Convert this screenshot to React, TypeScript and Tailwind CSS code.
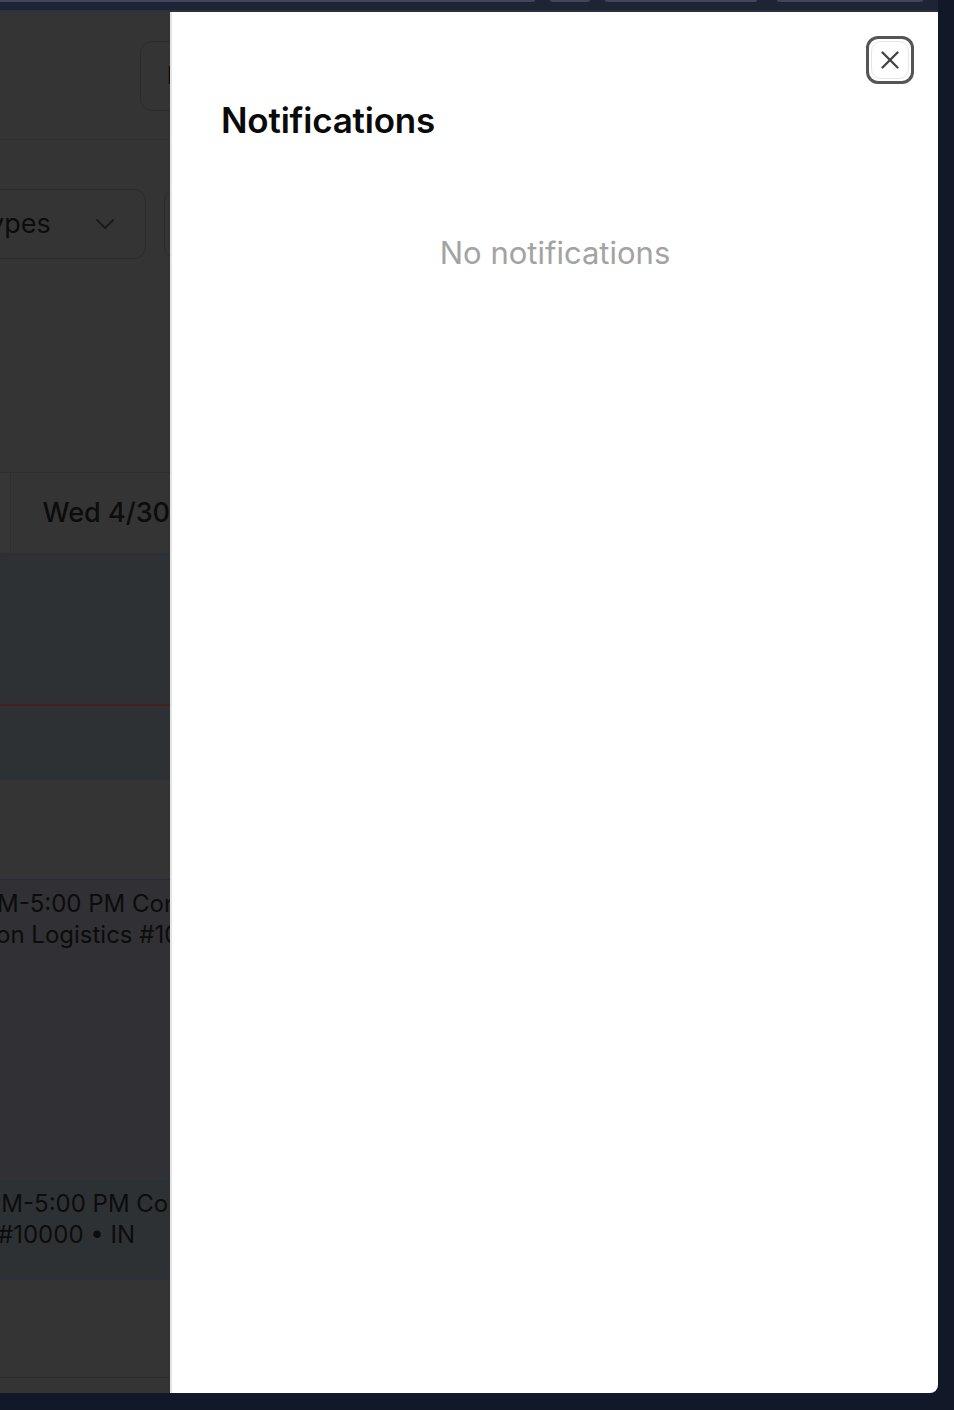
import React from "react";

const font = { fontFamily: "Inter, 'Noto Sans', sans-serif" };

function CloseIcon() {
  return (
    <svg width="30" height="30" viewBox="0 0 24 24" fill="none" stroke="#444444" strokeWidth="1.9" strokeLinecap="round" strokeLinejoin="round">
      <path d="M18 6 6 18" />
      <path d="m6 6 12 12" />
    </svg>
  );
}

function Chevron() {
  return (
    <svg width="20" height="12" viewBox="0 0 20 12" fill="none" stroke="#1a1a1a" strokeWidth="2" strokeLinecap="round" strokeLinejoin="round">
      <path d="M2 2 10 10 18 2" />
    </svg>
  );
}

function Backdrop() {
  return (
    <div className="w-[170px] h-full overflow-hidden flex flex-col bg-[#343434] text-[#0c0c0c]" style={font}>
      {/* header */}
      <div className="h-[128px] shrink-0 border-b border-[#303030] pt-[29px] pl-[140px]">
        <div className="h-[70px] w-[120px] rounded-[12px] border border-[#2c2c2c] flex items-center pl-[26px] text-[24px] font-semibold">
          M
        </div>
      </div>
      {/* filters */}
      <div className="h-[332px] shrink-0 pt-[49px] flex">
        <div className="h-[70px] w-[160px] ml-[-14px] shrink-0 rounded-[12px] border border-[#2c2c2c] flex items-center justify-between pl-[4px] pr-[30px]">
          <span className="text-[27px] whitespace-nowrap ml-[-2px]">ypes</span>
          <Chevron />
        </div>
        <div className="h-[70px] w-[60px] ml-[18px] shrink-0 rounded-[12px] border border-[#2c2c2c]" />
      </div>
      {/* day header */}
      <div className="h-[81px] shrink-0 border-t border-[#2e2e2e] flex">
        <div className="w-[12px] border-r border-[#2e2e2e] bg-[#363636]" />
        <div className="flex-1 flex items-center pl-[31px] text-[27px] font-medium whitespace-nowrap">Wed 4/30</div>
      </div>
      {/* bluish block */}
      <div className="h-[227px] shrink-0 bg-[#2e3134] flex flex-col">
        <div className="h-[151px]" />
        <div className="h-[2px] bg-[#4a1c1c]" />
        <div className="flex-1 border-b border-[#283044]" />
      </div>
      <div className="h-[100px] shrink-0 bg-[#343434] border-b border-[#2c2a38]" />
      {/* event 1 */}
      <div className="h-[300px] shrink-0 bg-[#313034] pt-[8px] text-[24px] leading-[31px] whitespace-nowrap">
        <div className="-ml-[3px]">M-5:00 PM Contractor</div>
        <div className="-ml-[4px]">on Logistics #10000 • IN</div>
      </div>
      {/* event 2 */}
      <div className="h-[100px] shrink-0 bg-[#2e3134] border-y border-[#263044] pt-[7px] text-[24px] leading-[31px] whitespace-nowrap">
        <div className="-ml-[14px]">PM-5:00 PM Contractor</div>
        <div className="-ml-[2px]">#10000 • IN</div>
      </div>
      <div className="h-[98px] shrink-0 bg-[#343434] border-b border-[#2e2e2e]" />
      <div className="flex-1 bg-[#343434]" />
    </div>
  );
}

export default function App() {
  return (
    <div className="w-[954px] h-[1410px] bg-[#111827] flex flex-col overflow-hidden" style={font}>
      {/* top strip */}
      <div className="w-[938px] h-[12px] shrink-0 bg-[#1e2434] flex flex-col">
        <div className="h-[2px] flex">
          <div className="w-[535px] bg-[#414660] rounded-br-[4px]" />
          <div className="w-[15px]" />
          <div className="w-[40px] bg-[#414660] rounded-b-[4px]" />
          <div className="w-[15px]" />
          <div className="w-[152px] bg-[#414660] rounded-b-[4px]" />
          <div className="w-[20px]" />
          <div className="w-[146px] bg-[#414660] rounded-b-[4px]" />
        </div>
        <div className="flex-1" />
        <div className="h-[2px] bg-[#2a3040]" />
      </div>
      {/* main */}
      <div className="w-[938px] h-[1381px] shrink-0 rounded-br-[8px] overflow-hidden flex">
        <Backdrop />
        <div className="flex-1 bg-white border-l-2 border-[#e4e4e4] flex flex-col">
          <div className="flex justify-end pt-[24px] pr-[24px]">
            <button className="w-[48px] h-[48px] rounded-[12px] border-[3px] border-[#555555] flex items-center justify-center p-[2px]">
              <span className="w-full h-full rounded-[10px] border border-[#e6e6e6] flex items-center justify-center">
                <CloseIcon />
              </span>
            </button>
          </div>
          <h2 className="pl-[49px] mt-[14px] text-[35px] leading-[44px] font-semibold text-[#0a0a0a] tracking-[-0.2px]">Notifications</h2>
          <div className="mt-[93px] text-center text-[31px] leading-[36px] text-[#a3a3a3]">No notifications</div>
        </div>
      </div>
      <div className="flex-1" />
    </div>
  );
}
